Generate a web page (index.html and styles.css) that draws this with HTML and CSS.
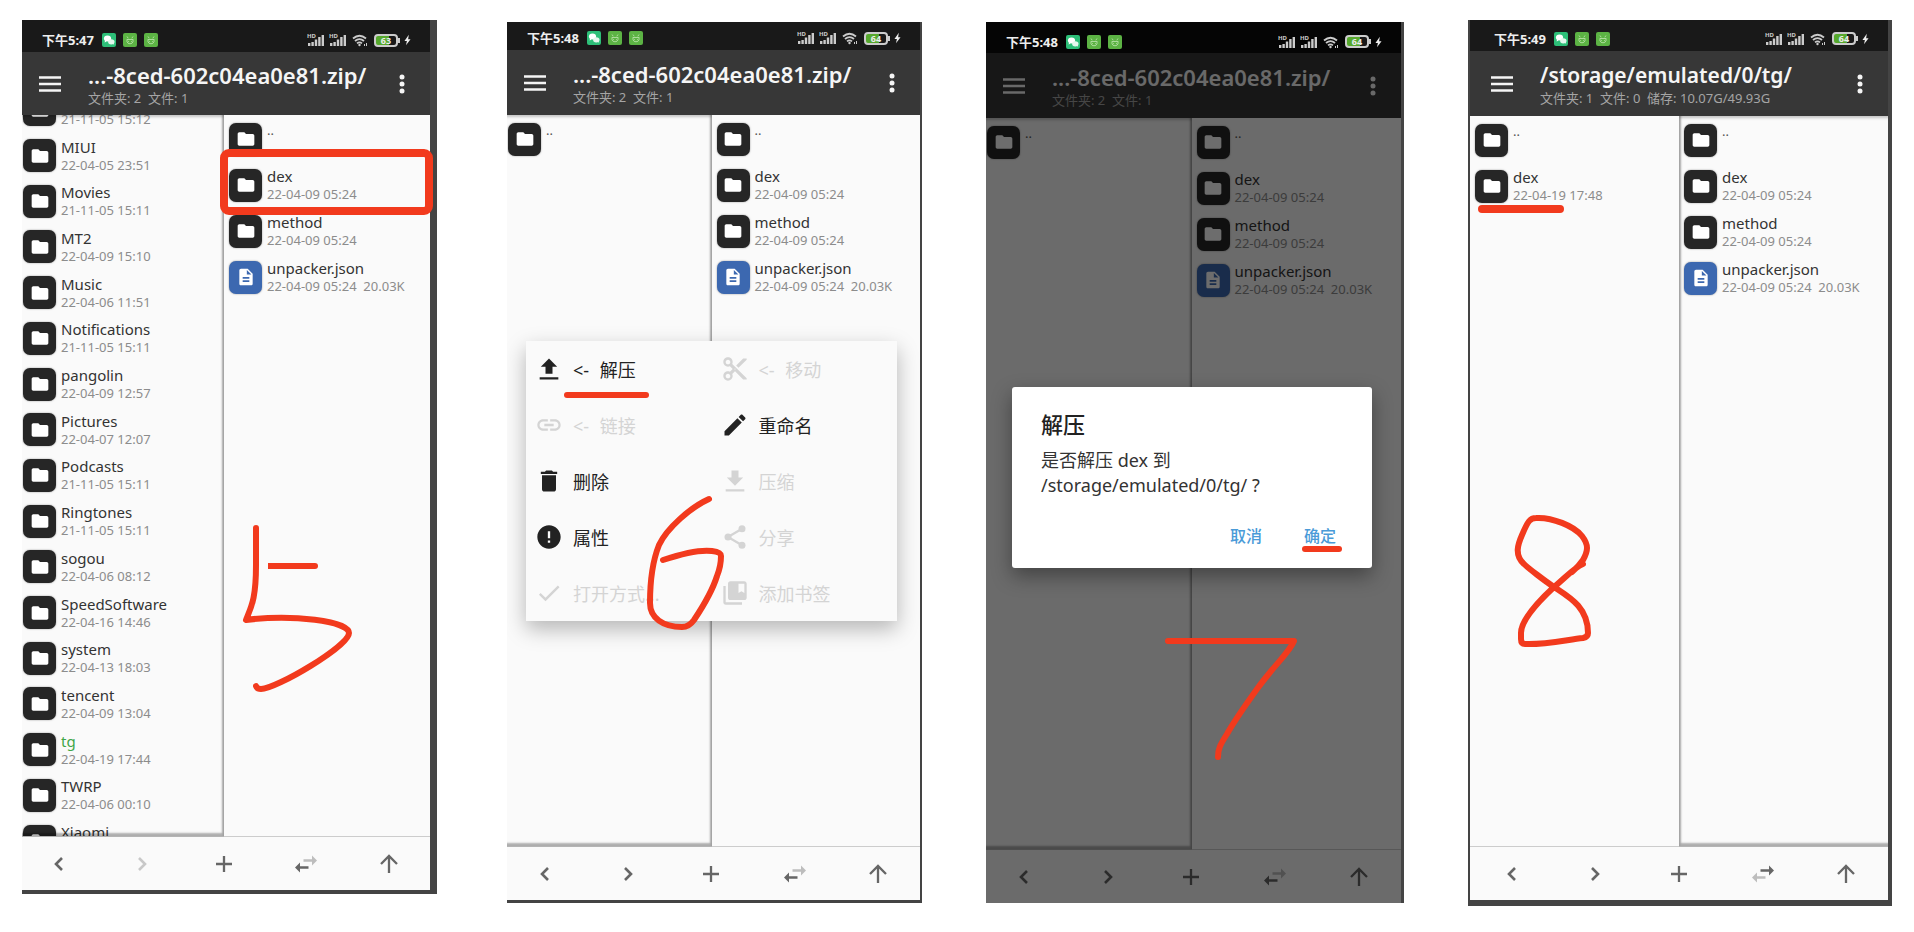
FILE: index.html
```html
<!DOCTYPE html>
<html lang="zh-CN">
<head>
<meta charset="utf-8">
<title>MT 文件解压步骤 5–8</title>
<meta name="viewport" content="width=device-width, initial-scale=1">
<link rel="stylesheet" href="styles.css">
</head>
<body>
<svg class="sprite" aria-hidden="true">
  <symbol id="folder" viewBox="0 0 24 24"><path d="M10 4H4c-1.1 0-2 .9-2 2v12c0 1.100.9 2 2 2h16c1.100 0 2-.9 2-2V8c0-1.100-.9-2-2-2h-8l-2-2z"/></symbol>
  <symbol id="doc" viewBox="0 0 24 24"><path d="M14 2H6c-1.100 0-2 .9-2 2v16c0 1.100.9 2 2 2h12c1.100 0 2-.9 2-2V8l-6-6zm2 16H8v-2h8v2zm0-4H8v-2h8v2zm-3-5V3.500L18.500 9H13z"/></symbol>
  <symbol id="burger" viewBox="0 0 22 16"><path d="M0 1.500h22M0 8h22M0 14.500h22" stroke="currentColor" stroke-width="2.400"/></symbol>
  <symbol id="kebab" viewBox="0 0 6 20"><circle cx="3" cy="3" r="2.500"/><circle cx="3" cy="10" r="2.500"/><circle cx="3" cy="17" r="2.500"/></symbol>
  <symbol id="wechat" viewBox="0 0 14 14"><rect width="14" height="14" rx="2" fill="#2dbf78"/><ellipse cx="5.500" cy="5.500" rx="3.600" ry="3" fill="#fff"/><path d="M3 7.500l-.4 2 2-1z" fill="#fff"/><ellipse cx="9.300" cy="8.800" rx="3.200" ry="2.600" fill="#e4f8ee"/><path d="M10.500 10.800l1.600 1-.3-2z" fill="#e4f8ee"/></symbol>
  <symbol id="robot" viewBox="0 0 14 14"><rect width="14" height="14" rx="2" fill="#5cb344"/><path d="M4 3.500l1.200 1.800M10 3.500L8.800 5.300M4 6.500h6M4 6.200v2.500q.5 2 3 2.100q2.500-.1 3-2.100V6.200M5.500 8v.8M8.500 8v.8" fill="none" stroke="#b4e0a4" stroke-width=".9"/></symbol>
  <symbol id="signal" viewBox="0 0 18 14"><text x="0" y="5" class="hd">HD</text><path d="M1 13v-3h2.400v3zM4.400 13V9h2.400v4zM7.800 13V6.500h2.400V13zM11.200 13V4h2.400v9zM14.600 13V2H17v11z"/></symbol>
  <symbol id="wifi" viewBox="0 0 16 14"><g fill="none" stroke="currentColor" stroke-width="1.800"><path d="M1 5.500q6.500-5.500 13 0M3 8q4.500-3.800 9 0M5 10.400q2.500-2 5 0"/></g><circle cx="7.500" cy="12" r="1.200"/><path d="M12.500 11v2M14.500 10v3" stroke="currentColor"/></symbol>
  <symbol id="bolt" viewBox="0 0 8 12"><path d="M5.500 0L.5 7h2.800l-1 5L7.500 5H4.700z"/></symbol>
  <symbol id="back" viewBox="0 0 24 24"><path d="M15 6L9 12l6 6" fill="none" stroke="currentColor" stroke-width="2.600"/></symbol>
  <symbol id="forward" viewBox="0 0 24 24"><path d="M9 6l6 6-6 6" fill="none" stroke="currentColor" stroke-width="2.600"/></symbol>
  <symbol id="plus" viewBox="0 0 24 24"><path d="M12 4v16M4 12h16" fill="none" stroke="currentColor" stroke-width="2.300"/></symbol>
  <symbol id="arrow-left" viewBox="0 0 24 24"><path d="M1 15.500l5-5v3.700h8.500v2.600H6v3.700z"/></symbol>
  <symbol id="arrow-right" viewBox="0 0 24 24"><path d="M23 8.500l-5-5v3.700H9.500v2.600H18v3.700z"/></symbol>
  <symbol id="up" viewBox="0 0 24 24"><path d="M12 21V4M4 12l8-8 8 8" fill="none" stroke="currentColor" stroke-width="2.300"/></symbol>
  <symbol id="extract" viewBox="0 0 24 24"><path d="M9 16h6v-6h4l-7-7-7 7h4zM4 19h16v2H4z"/></symbol>
  <symbol id="cut" viewBox="0 0 24 24"><path d="M9.640 7.640c.23-.5.36-1.050.36-1.640 0-2.210-1.790-4-4-4S2 3.790 2 6s1.790 4 4 4c.59 0 1.140-.13 1.640-.36L10 12l-2.360 2.360C7.140 14.130 6.590 14 6 14c-2.210 0-4 1.790-4 4s1.790 4 4 4 4-1.790 4-4c0-.59-.13-1.140-.36-1.640L12 14l7 7h3v-1L9.640 7.640zM6 8c-1.100 0-2-.89-2-2s.9-2 2-2 2 .89 2 2-.9 2-2 2zm0 12c-1.100 0-2-.89-2-2s.9-2 2-2 2 .89 2 2-.9 2-2 2zm6-7.500c-.28 0-.5-.22-.5-.5s.22-.5.5-.5.5.22.5.5-.22.5-.5.5zM19 3l-6 6 2 2 7-7V3z"/></symbol>
  <symbol id="link" viewBox="0 0 24 24"><path d="M3.900 12c0-1.710 1.390-3.100 3.100-3.100h4V7H7c-2.760 0-5 2.240-5 5s2.240 5 5 5h4v-1.900H7c-1.710 0-3.100-1.390-3.100-3.100zM8 13h8v-2H8v2zm9-6h-4v1.900h4c1.710 0 3.100 1.390 3.100 3.100s-1.390 3.100-3.100 3.100h-4V17h4c2.760 0 5-2.240 5-5s-2.240-5-5-5z"/></symbol>
  <symbol id="edit" viewBox="0 0 24 24"><path d="M3 17.250V21h3.750L17.810 9.940l-3.750-3.750L3 17.250zM20.710 7.040c.39-.39.39-1.020 0-1.410l-2.340-2.340c-.39-.39-1.020-.39-1.410 0l-1.830 1.830 3.750 3.750 1.830-1.830z"/></symbol>
  <symbol id="trash" viewBox="0 0 24 24"><path d="M6 19c0 1.100.9 2 2 2h8c1.100 0 2-.9 2-2V7H6v12zM19 4h-3.500l-1-1h-5l-1 1H5v2h14V4z"/></symbol>
  <symbol id="compress" viewBox="0 0 24 24"><path d="M19 9h-4V3H9v6H5l7 7 7-7zM4 19v2h16v-2H4z"/></symbol>
  <symbol id="info" viewBox="0 0 24 24"><path d="M12 2C6.480 2 2 6.480 2 12s4.480 10 10 10 10-4.480 10-10S17.520 2 12 2zm1 15h-2v-2h2v2zm0-4h-2V7h2v6z"/></symbol>
  <symbol id="share" viewBox="0 0 24 24"><path d="M6 12L18 5M6 12l12 7" stroke="currentColor" stroke-width="2"/><circle cx="6" cy="12" r="3"/><circle cx="18" cy="5" r="3"/><circle cx="18" cy="19" r="3"/></symbol>
  <symbol id="check" viewBox="0 0 24 24"><path d="M9 16.170L4.830 12l-1.420 1.410L9 19 21 7l-1.410-1.410z"/></symbol>
  <symbol id="bookmark" viewBox="0 0 24 24"><path d="M4 6H2v14c0 1.100.9 2 2 2h14v-2H4V6zm16-4H8c-1.100 0-2 .9-2 2v12c0 1.100.9 2 2 2h12c1.100 0 2-.9 2-2V4c0-1.100-.9-2-2-2zm0 10l-2.500-1.500L15 12V4h5v8z"/></symbol>
</svg>

<main class="board">

  <section class="phone phone-5">
    <div class="frame"><div class="screen">
      <div class="status">
        <span class="clock">下午5:47</span>
        <svg class="app"><use href="#wechat"/></svg><svg class="app"><use href="#robot"/></svg><svg class="app"><use href="#robot"/></svg>
        <span class="spacer"></span>
        <svg class="signal"><use href="#signal"/></svg><svg class="signal"><use href="#signal"/></svg><svg class="wifi"><use href="#wifi"/></svg><span class="battery">63</span><svg class="bolt"><use href="#bolt"/></svg>
      </div>
      <header class="bar">
        <button class="icon-btn" aria-label="菜单"><svg class="burger"><use href="#burger"/></svg></button>
        <div class="heading"><h1>...-8ced-602c04ea0e81.zip/</h1><p>文件夹: 2&nbsp; 文件: 1</p></div>
        <button class="icon-btn" aria-label="更多"><svg class="kebab"><use href="#kebab"/></svg></button>
      </header>
      <div class="panes">
        <div class="pane pane-sunk">
          <ul class="list list-scrolled">
            <li><button class="entry"><span class="tile"><svg><use href="#folder"/></svg></span><span class="meta"><span class="name"></span><span class="date">21-11-05 15:12</span></span></button></li>
            <li><button class="entry"><span class="tile"><svg><use href="#folder"/></svg></span><span class="meta"><span class="name">MIUI</span><span class="date">22-04-05 23:51</span></span></button></li>
            <li><button class="entry"><span class="tile"><svg><use href="#folder"/></svg></span><span class="meta"><span class="name">Movies</span><span class="date">21-11-05 15:11</span></span></button></li>
            <li><button class="entry"><span class="tile"><svg><use href="#folder"/></svg></span><span class="meta"><span class="name">MT2</span><span class="date">22-04-09 15:10</span></span></button></li>
            <li><button class="entry"><span class="tile"><svg><use href="#folder"/></svg></span><span class="meta"><span class="name">Music</span><span class="date">22-04-06 11:51</span></span></button></li>
            <li><button class="entry"><span class="tile"><svg><use href="#folder"/></svg></span><span class="meta"><span class="name">Notifications</span><span class="date">21-11-05 15:11</span></span></button></li>
            <li><button class="entry"><span class="tile"><svg><use href="#folder"/></svg></span><span class="meta"><span class="name">pangolin</span><span class="date">22-04-09 12:57</span></span></button></li>
            <li><button class="entry"><span class="tile"><svg><use href="#folder"/></svg></span><span class="meta"><span class="name">Pictures</span><span class="date">22-04-07 12:07</span></span></button></li>
            <li><button class="entry"><span class="tile"><svg><use href="#folder"/></svg></span><span class="meta"><span class="name">Podcasts</span><span class="date">21-11-05 15:11</span></span></button></li>
            <li><button class="entry"><span class="tile"><svg><use href="#folder"/></svg></span><span class="meta"><span class="name">Ringtones</span><span class="date">21-11-05 15:11</span></span></button></li>
            <li><button class="entry"><span class="tile"><svg><use href="#folder"/></svg></span><span class="meta"><span class="name">sogou</span><span class="date">22-04-06 08:12</span></span></button></li>
            <li><button class="entry"><span class="tile"><svg><use href="#folder"/></svg></span><span class="meta"><span class="name">SpeedSoftware</span><span class="date">22-04-16 14:46</span></span></button></li>
            <li><button class="entry"><span class="tile"><svg><use href="#folder"/></svg></span><span class="meta"><span class="name">system</span><span class="date">22-04-13 18:03</span></span></button></li>
            <li><button class="entry"><span class="tile"><svg><use href="#folder"/></svg></span><span class="meta"><span class="name">tencent</span><span class="date">22-04-09 13:04</span></span></button></li>
            <li><button class="entry"><span class="tile"><svg><use href="#folder"/></svg></span><span class="meta"><span class="name name-current">tg</span><span class="date">22-04-19 17:44</span></span></button></li>
            <li><button class="entry"><span class="tile"><svg><use href="#folder"/></svg></span><span class="meta"><span class="name">TWRP</span><span class="date">22-04-06 00:10</span></span></button></li>
            <li><button class="entry"><span class="tile"><svg><use href="#folder"/></svg></span><span class="meta"><span class="name">Xiaomi</span></span></button></li>
          </ul>
        </div>
        <div class="pane">
          <ul class="list">
            <li><button class="entry"><span class="tile"><svg><use href="#folder"/></svg></span><span class="meta"><span class="parent">..</span></span></button></li>
            <li><button class="entry"><span class="tile"><svg><use href="#folder"/></svg></span><span class="meta"><span class="name">dex</span><span class="date">22-04-09 05:24</span></span></button></li>
            <li><button class="entry"><span class="tile"><svg><use href="#folder"/></svg></span><span class="meta"><span class="name">method</span><span class="date">22-04-09 05:24</span></span></button></li>
            <li><button class="entry"><span class="tile tile-file"><svg><use href="#doc"/></svg></span><span class="meta"><span class="name">unpacker.json</span><span class="date">22-04-09 05:24&nbsp; 20.03K</span></span></button></li>
          </ul>
        </div>
      </div>
      <nav class="tools">
        <button aria-label="后退"><svg><use href="#back"/></svg></button>
        <button aria-label="前进" disabled><svg><use href="#forward"/></svg></button>
        <button aria-label="新建"><svg><use href="#plus"/></svg></button>
        <button aria-label="切换"><svg><use href="#arrow-left"/><use class="faded" href="#arrow-right"/></svg></button>
        <button aria-label="上级"><svg><use href="#up"/></svg></button>
      </nav>
    </div></div>
    <svg class="ink" viewBox="0 0 415 874" role="img" aria-label="5">
      <rect class="thick" x="202" y="133" width="205" height="58" rx="5"/>
      <path d="M234 508V545C234 580 229 587 224 600C270 594 327 601 327 613C327 626 254 669 239 669Q235 669 234 666"/>
      <path class="flat" d="M246 546h45"/><path d="M288 546h5"/>
    </svg>
  </section>

  <section class="phone phone-6">
    <div class="frame"><div class="screen">
      <div class="status">
        <span class="clock">下午5:48</span>
        <svg class="app"><use href="#wechat"/></svg><svg class="app"><use href="#robot"/></svg><svg class="app"><use href="#robot"/></svg>
        <span class="spacer"></span>
        <svg class="signal"><use href="#signal"/></svg><svg class="signal"><use href="#signal"/></svg><svg class="wifi"><use href="#wifi"/></svg><span class="battery">64</span><svg class="bolt"><use href="#bolt"/></svg>
      </div>
      <header class="bar">
        <button class="icon-btn" aria-label="菜单"><svg class="burger"><use href="#burger"/></svg></button>
        <div class="heading"><h1>...-8ced-602c04ea0e81.zip/</h1><p>文件夹: 2&nbsp; 文件: 1</p></div>
        <button class="icon-btn" aria-label="更多"><svg class="kebab"><use href="#kebab"/></svg></button>
      </header>
      <div class="panes">
        <div class="pane pane-sunk">
          <ul class="list">
            <li><button class="entry"><span class="tile"><svg><use href="#folder"/></svg></span><span class="meta"><span class="parent">..</span></span></button></li>
          </ul>
        </div>
        <div class="pane">
          <ul class="list">
            <li><button class="entry"><span class="tile"><svg><use href="#folder"/></svg></span><span class="meta"><span class="parent">..</span></span></button></li>
            <li><button class="entry"><span class="tile"><svg><use href="#folder"/></svg></span><span class="meta"><span class="name">dex</span><span class="date">22-04-09 05:24</span></span></button></li>
            <li><button class="entry"><span class="tile"><svg><use href="#folder"/></svg></span><span class="meta"><span class="name">method</span><span class="date">22-04-09 05:24</span></span></button></li>
            <li><button class="entry"><span class="tile tile-file"><svg><use href="#doc"/></svg></span><span class="meta"><span class="name">unpacker.json</span><span class="date">22-04-09 05:24&nbsp; 20.03K</span></span></button></li>
          </ul>
        </div>
      </div>
      <nav class="tools">
        <button aria-label="后退"><svg><use href="#back"/></svg></button>
        <button aria-label="前进"><svg><use href="#forward"/></svg></button>
        <button aria-label="新建"><svg><use href="#plus"/></svg></button>
        <button aria-label="切换"><svg><use href="#arrow-left"/><use class="faded" href="#arrow-right"/></svg></button>
        <button aria-label="上级"><svg><use href="#up"/></svg></button>
      </nav>
      <div class="menu">
        <button><svg><use href="#extract"/></svg><span><span class="dir">&lt;-</span> 解压</span></button>
        <button disabled><svg><use href="#cut"/></svg><span><span class="dir">&lt;-</span> 移动</span></button>
        <button disabled><svg><use href="#link"/></svg><span><span class="dir">&lt;-</span> 链接</span></button>
        <button><svg><use href="#edit"/></svg>重命名</button>
        <button><svg><use href="#trash"/></svg>删除</button>
        <button disabled><svg><use href="#compress"/></svg>压缩</button>
        <button><svg><use href="#info"/></svg>属性</button>
        <button disabled><svg><use href="#share"/></svg>分享</button>
        <button disabled><svg><use href="#check"/></svg>打开方式...</button>
        <button disabled><svg><use href="#bookmark"/></svg>添加书签</button>
      </div>
    </div></div>
    <svg class="ink" viewBox="0 0 415 881" role="img" aria-label="6">
      <path d="M60 373H139"/>
      <path d="M202 477C184 485 160 506 152 523C144 543 143 566 143 581C143 596 156 605 175 605Q182 605 187 598C197 583 206 567 210 554C214 544 214 538 214 534Q214 530 205 529C190 527 168 534 156 538"/>
    </svg>
  </section>

  <section class="phone phone-7">
    <div class="frame"><div class="screen">
      <div class="status">
        <span class="clock">下午5:48</span>
        <svg class="app"><use href="#wechat"/></svg><svg class="app"><use href="#robot"/></svg><svg class="app"><use href="#robot"/></svg>
        <span class="spacer"></span>
        <svg class="signal"><use href="#signal"/></svg><svg class="signal"><use href="#signal"/></svg><svg class="wifi"><use href="#wifi"/></svg><span class="battery">64</span><svg class="bolt"><use href="#bolt"/></svg>
      </div>
      <header class="bar">
        <button class="icon-btn" aria-label="菜单"><svg class="burger"><use href="#burger"/></svg></button>
        <div class="heading"><h1>...-8ced-602c04ea0e81.zip/</h1><p>文件夹: 2&nbsp; 文件: 1</p></div>
        <button class="icon-btn" aria-label="更多"><svg class="kebab"><use href="#kebab"/></svg></button>
      </header>
      <div class="panes">
        <div class="pane pane-sunk">
          <ul class="list">
            <li><button class="entry"><span class="tile"><svg><use href="#folder"/></svg></span><span class="meta"><span class="parent">..</span></span></button></li>
          </ul>
        </div>
        <div class="pane">
          <ul class="list">
            <li><button class="entry"><span class="tile"><svg><use href="#folder"/></svg></span><span class="meta"><span class="parent">..</span></span></button></li>
            <li><button class="entry"><span class="tile"><svg><use href="#folder"/></svg></span><span class="meta"><span class="name">dex</span><span class="date">22-04-09 05:24</span></span></button></li>
            <li><button class="entry"><span class="tile"><svg><use href="#folder"/></svg></span><span class="meta"><span class="name">method</span><span class="date">22-04-09 05:24</span></span></button></li>
            <li><button class="entry"><span class="tile tile-file"><svg><use href="#doc"/></svg></span><span class="meta"><span class="name">unpacker.json</span><span class="date">22-04-09 05:24&nbsp; 20.03K</span></span></button></li>
          </ul>
        </div>
      </div>
      <nav class="tools">
        <button aria-label="后退"><svg><use href="#back"/></svg></button>
        <button aria-label="前进"><svg><use href="#forward"/></svg></button>
        <button aria-label="新建"><svg><use href="#plus"/></svg></button>
        <button aria-label="切换"><svg><use href="#arrow-left"/><use class="faded" href="#arrow-right"/></svg></button>
        <button aria-label="上级"><svg><use href="#up"/></svg></button>
      </nav>
      <div class="scrim"></div>
      <div class="dialog" role="dialog" aria-labelledby="dlg-title">
        <h2 id="dlg-title">解压</h2>
        <p>是否解压 dex 到<br>/storage/emulated/0/tg/ ?</p>
        <div class="actions"><button>取消</button><button>确定</button></div>
      </div>
    </div></div>
    <svg class="ink" viewBox="0 0 418 881" role="img" aria-label="7">
      <path d="M319 527H353"/>
      <path d="M182 619H308C303 631 290 641 271 667C256 688 247 701 241 712C234 723 232 727 232 735"/>
    </svg>
  </section>

  <section class="phone phone-8">
    <div class="frame"><div class="screen">
      <div class="status">
        <span class="clock">下午5:49</span>
        <svg class="app"><use href="#wechat"/></svg><svg class="app"><use href="#robot"/></svg><svg class="app"><use href="#robot"/></svg>
        <span class="spacer"></span>
        <svg class="signal"><use href="#signal"/></svg><svg class="signal"><use href="#signal"/></svg><svg class="wifi"><use href="#wifi"/></svg><span class="battery">64</span><svg class="bolt"><use href="#bolt"/></svg>
      </div>
      <header class="bar">
        <button class="icon-btn" aria-label="菜单"><svg class="burger"><use href="#burger"/></svg></button>
        <div class="heading"><h1>/storage/emulated/0/tg/</h1><p>文件夹: 1&nbsp; 文件: 0&nbsp; 储存: 10.07G/49.93G</p></div>
        <button class="icon-btn" aria-label="更多"><svg class="kebab"><use href="#kebab"/></svg></button>
      </header>
      <div class="panes">
        <div class="pane">
          <ul class="list">
            <li><button class="entry"><span class="tile"><svg><use href="#folder"/></svg></span><span class="meta"><span class="parent">..</span></span></button></li>
            <li><button class="entry"><span class="tile"><svg><use href="#folder"/></svg></span><span class="meta"><span class="name">dex</span><span class="date">22-04-19 17:48</span></span></button></li>
          </ul>
        </div>
        <div class="pane pane-sunk">
          <ul class="list">
            <li><button class="entry"><span class="tile"><svg><use href="#folder"/></svg></span><span class="meta"><span class="parent">..</span></span></button></li>
            <li><button class="entry"><span class="tile"><svg><use href="#folder"/></svg></span><span class="meta"><span class="name">dex</span><span class="date">22-04-09 05:24</span></span></button></li>
            <li><button class="entry"><span class="tile"><svg><use href="#folder"/></svg></span><span class="meta"><span class="name">method</span><span class="date">22-04-09 05:24</span></span></button></li>
            <li><button class="entry"><span class="tile tile-file"><svg><use href="#doc"/></svg></span><span class="meta"><span class="name">unpacker.json</span><span class="date">22-04-09 05:24&nbsp; 20.03K</span></span></button></li>
          </ul>
        </div>
      </div>
      <nav class="tools">
        <button aria-label="后退"><svg><use href="#back"/></svg></button>
        <button aria-label="前进"><svg><use href="#forward"/></svg></button>
        <button aria-label="新建"><svg><use href="#plus"/></svg></button>
        <button aria-label="切换"><svg><use class="faded" href="#arrow-left"/><use href="#arrow-right"/></svg></button>
        <button aria-label="上级"><svg><use href="#up"/></svg></button>
      </nav>
    </div></div>
    <svg class="ink" viewBox="0 0 424 886" role="img" aria-label="8">
      <path class="thick" d="M14 189H92"/>
      <path d="M115 544C107 547 98 557 86 567C72 580 53 600 53 613V619Q53 624 57 624C75 625 98 620 115 618Q120 617 120 613C120 587 101 577 86 567C77 561 60 548 56 544C46 535 50 524 54 515C60 501 62 498 68 498C84 497 106 506 114 516C121 525 120 531 115 540Q111 546 104 552"/>
    </svg>
  </section>

</main>
</body>
</html>
```

FILE: styles.css
```css
* { box-sizing: border-box; }

body {
  margin: 0;
  background: #fff;
  font-family: "Noto Sans", "Noto Sans CJK SC", sans-serif;
  color: #333;
}

h1, h2, p, ul { margin: 0; padding: 0; font-weight: 400; }
ul { list-style: none; }

button {
  border: 0;
  padding: 0;
  background: none;
  font: inherit;
  color: inherit;
  text-align: left;
}

svg { display: block; flex: none; fill: currentColor; }
.sprite { position: absolute; width: 0; height: 0; }

.board {
  display: grid;
  grid-template-columns: 415fr 421fr 418fr 424fr;
  column-gap: 64px;
  min-height: 100vh;
  padding: 20px 22px 26px;
}

/* Phone frames */
.phone { position: relative; display: flex; min-width: 0; }
.phone-5 { margin-bottom: 12px; }
.phone-6 { margin: 2px 0 3px 6px; }
.phone-7 { margin: 2px 0 3px; }

.frame {
  flex: 1;
  display: flex;
  min-width: 0;
  overflow: hidden;
  border: 0 solid #444;
}
.phone-5 .frame { border-width: 0 7px 4px 0; }
.phone-6 .frame { border-width: 0 2px 3px 0; }
.phone-7 .frame { border-width: 0 3px 0 0; }
.phone-8 .frame { border-width: 0 4px 6px 2px; }

.screen {
  position: relative;
  flex: 1;
  display: flex;
  flex-direction: column;
  min-width: 0;
  margin-left: -4px;
  background: #fafafa;
}
.phone-8 .screen { margin-left: 0; }

/* Status bar */
.status {
  display: flex;
  align-items: center;
  height: 31px;
  padding: 4px 19px 0 24px;
  background: #191919;
  color: #eee;
}
.phone-5 .status { height: 32px; padding-top: 8px; }
.phone-6 .status { height: 28px; }
.phone-7 .status { padding-top: 8px; background: #050505; }
.phone-8 .status { padding-top: 6px; }
.clock { margin-right: 8px; font-size: 13px; line-height: 20px; font-weight: 700; }
.app { width: 14px; height: 14px; margin-right: 7px; }
.spacer { flex: 1; }
.signal { width: 18px; height: 14px; margin-right: 4px; color: #ccc; }
.hd { font-size: 6px; font-weight: 700; }
.wifi { width: 16px; height: 14px; margin: 0 6px 0 1px; color: #ccc; }
.battery {
  position: relative;
  width: 24px;
  height: 13px;
  margin-right: 6px;
  border: 2px solid #ccc;
  border-radius: 4px;
  background: linear-gradient(90deg, #55a82c 64%, #191919 64%);
  font-size: 9px;
  line-height: 9px;
  font-weight: 700;
  text-align: center;
}
.battery::after {
  content: "";
  position: absolute;
  top: 2px;
  right: -4px;
  width: 2px;
  height: 5px;
  background: #ccc;
}
.bolt { width: 7px; height: 12px; }

/* Title bar */
.bar {
  display: flex;
  align-items: center;
  height: 65px;
  padding: 0 25px 0 21px;
  background: #373737;
  color: #f5f5f5;
}
.phone-5 .bar { height: 63px; }
.burger { width: 22px; height: 16px; }
.kebab { width: 6px; height: 20px; }
.heading { flex: 1; min-width: 0; margin-left: 27px; white-space: nowrap; }
.heading h1 { font-size: 22px; line-height: 28px; font-weight: 600; }
.phone-8 .heading h1 { font-size: 21px; }
.heading p { font-size: 13px; line-height: 18px; color: #a5a5a5; }

/* File panes */
.panes { flex: 1; display: grid; grid-template-columns: 1fr 1fr; min-height: 0; }
.pane {
  position: relative;
  display: flex;
  flex-direction: column;
  min-height: 0;
  overflow: hidden;
  border-bottom: 1px solid #ccc;
}
.pane-sunk { border-bottom-color: #b4b4b4; }
.pane-sunk::after {
  content: "";
  position: absolute;
  inset: 0;
  box-shadow: inset -2px -3px 2px #0000004d, inset 0 2px 3px #00000038;
  pointer-events: none;
}
.phone-8 .pane-sunk::after {
  right: -6px;
  box-shadow: inset 2px -3px 2px #0000004d, inset 0 2px 3px #00000038;
}

.list { padding-top: 1px; }
.list-scrolled {
  flex: 1;
  display: flex;
  flex-direction: column;
  min-height: 0;
  margin: -28px 0;
  padding: 0;
}
.list-scrolled li { flex: 1; display: flex; align-items: center; min-height: 0; }
.entry {
  display: flex;
  align-items: center;
  gap: 5px;
  width: 100%;
  height: 46px;
  padding-left: 5px;
}
.list-scrolled .entry { height: 100%; }
.tile {
  flex: none;
  display: grid;
  place-items: center;
  width: 33px;
  height: 33px;
  border-radius: 7px;
  background: #262626;
  box-shadow: 0 0 2px #00000066;
  color: #fff;
}
.tile svg { width: 20px; height: 20px; }
.tile-file { background: #3c68b0; }
.meta {
  display: flex;
  flex-direction: column;
  height: 36px;
  line-height: 18px;
  white-space: nowrap;
}
.name { min-height: 18px; font-size: 15px; }
.name-current { color: #3fa648; }
.parent, .date { font-size: 13px; color: #8c8c8c; }
.parent { color: #555; }

/* Bottom toolbar */
.tools { display: grid; grid-template-columns: repeat(5, 1fr); height: 53px; color: #666; }
.tools button { display: grid; place-items: center; }
.tools button:disabled { color: #c8c8c8; }
.tools svg { width: 24px; height: 24px; }
.faded { color: #bdbdbd; fill: #bdbdbd; }

/* Context menu */
.menu {
  position: absolute;
  top: 319px;
  left: 23px;
  right: 23px;
  display: grid;
  grid-template-columns: 1fr 1fr;
  grid-auto-rows: 56px;
  background: #fafafa;
  box-shadow: 0 8px 20px #00000047;
  font-size: 18px;
  color: #222;
}
.menu button { display: flex; align-items: center; gap: 10px; padding-left: 9px; }
.menu button:disabled { color: #d4d4d4; }
.menu svg { width: 28px; height: 28px; }
.dir { margin-right: 6px; }

/* Confirm dialog */
.scrim { position: absolute; inset: 31px 0 0; background: #00000092; }
.dialog {
  position: absolute;
  top: 365px;
  left: 30px;
  right: 29px;
  padding: 21px 29px 16px;
  border-radius: 3px;
  background: #fff;
  box-shadow: 0 8px 20px #00000060;
}
.dialog h2 { font-size: 22px; line-height: 32px; font-weight: 500; color: #222; }
.dialog p { margin-top: 8px; font-size: 18px; line-height: 25px; }
.actions {
  display: flex;
  justify-content: flex-end;
  gap: 42px;
  margin-top: 22px;
  padding-right: 7px;
  font-size: 16px;
  line-height: 32px;
  font-weight: 500;
  color: #4a9bd8;
}

/* Hand-drawn marks */
.ink {
  position: absolute;
  inset: 0;
  width: 100%;
  height: 100%;
  overflow: visible;
  fill: none;
  stroke: #f23a1d;
  stroke-width: 6;
  stroke-linecap: round;
  stroke-linejoin: round;
  pointer-events: none;
}
.ink .thick { stroke-width: 8; }
.ink .flat { stroke-linecap: butt; }
```
